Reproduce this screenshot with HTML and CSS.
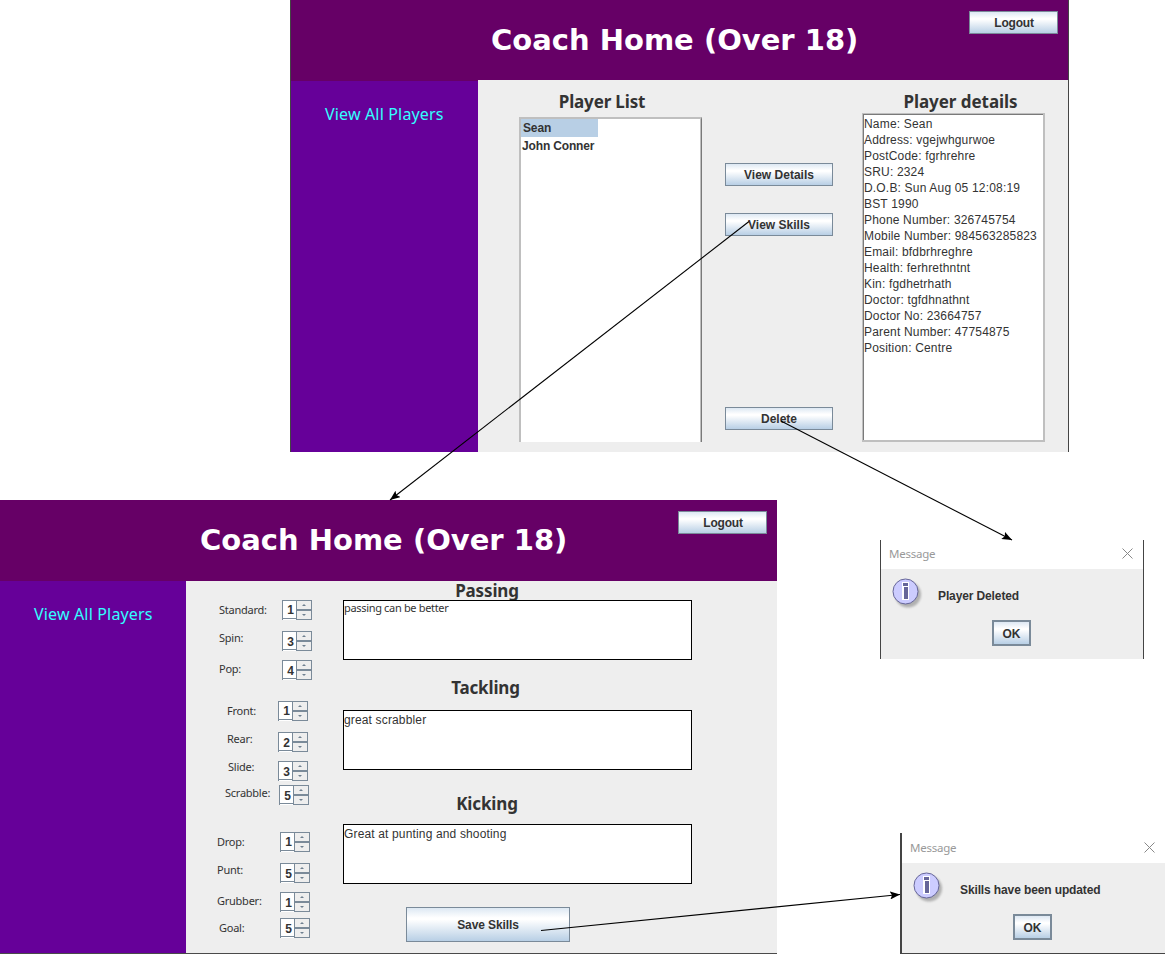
FILE: index.html
```html
<!DOCTYPE html>
<html lang="en">
<head>
<meta charset="utf-8">
<title>Coach Home</title>
<link rel="stylesheet" href="styles.css">
</head>
<body>
<main class="canvas">

  <section class="window home">
    <header class="banner"><h1>Coach Home (Over 18)</h1><button class="btn logout">Logout</button></header>
    <nav class="side"><a>View All Players</a></nav>
    <div class="home-body">
      <div class="list-col">
        <h2>Player List</h2>
        <ul class="list"><li class="selected">Sean</li><li>John Conner</li></ul>
      </div>
      <div class="actions">
        <button class="btn">View Details</button>
        <button class="btn">View Skills</button>
        <button class="btn delete">Delete</button>
      </div>
      <div class="details-col">
        <h2>Player details</h2>
        <div class="details">Name: Sean<br>Address: vgejwhgurwoe<br>PostCode: fgrhrehre<br>SRU: 2324<br>D.O.B: Sun Aug 05 12:08:19<br>BST 1990<br>Phone Number: 326745754<br>Mobile Number: 984563285823<br>Email: bfdbrhreghre<br>Health: ferhrethntnt<br>Kin: fgdhetrhath<br>Doctor: tgfdhnathnt<br>Doctor No: 23664757<br>Parent Number: 47754875<br>Position: Centre</div>
      </div>
    </div>
  </section>

  <section class="window skills">
    <header class="banner"><h1>Coach Home (Over 18)</h1><button class="btn logout">Logout</button></header>
    <nav class="side"><a>View All Players</a></nav>
    <div class="skills-body">
      <div class="ratings">
        <div class="group passing">
          <div class="row"><label>Standard:</label><span class="spin"><b>1</b><i class="up"></i><i class="down"></i></span></div>
          <div class="row gap-l"><label class="lift3">Spin:</label><span class="spin low"><b>3</b><i class="up"></i><i class="down"></i></span></div>
          <div class="row gap-m"><label class="lift1">Pop:</label><span class="spin low"><b>4</b><i class="up"></i><i class="down"></i></span></div>
        </div>
        <div class="group tackling">
          <div class="row"><label>Front:</label><span class="spin"><b>1</b><i class="up"></i><i class="down"></i></span></div>
          <div class="row gap-l"><label class="lift3">Rear:</label><span class="spin low"><b>2</b><i class="up"></i><i class="down"></i></span></div>
          <div class="row gap-m"><label class="lift4 in1">Slide:</label><span class="spin low"><b>3</b><i class="up"></i><i class="down"></i></span></div>
          <div class="row gap-s wide"><label class="lift2">Scrabble:</label><span class="spin low"><b>5</b><i class="up"></i><i class="down"></i></span></div>
        </div>
        <div class="group kicking">
          <div class="row"><label>Drop:</label><span class="spin"><b>1</b><i class="up"></i><i class="down"></i></span></div>
          <div class="row gap-l"><label class="lift3">Punt:</label><span class="spin low"><b>5</b><i class="up"></i><i class="down"></i></span></div>
          <div class="row gap-m"><label class="lift1">Grubber:</label><span class="spin low"><b>1</b><i class="up"></i><i class="down"></i></span></div>
          <div class="row gap-g"><label class="in2">Goal:</label><span class="spin low"><b>5</b><i class="up"></i><i class="down"></i></span></div>
        </div>
      </div>
      <div class="notes">
        <h2>Passing</h2>
        <div class="note tahoma">passing can be better</div>
        <h2 class="h-tackling">Tackling</h2>
        <div class="note">great scrabbler</div>
        <h2 class="h-kicking">Kicking</h2>
        <div class="note">Great at punting and shooting</div>
        <button class="btn save">Save Skills</button>
      </div>
    </div>
  </section>

  <section class="dialog deleted">
    <header><span>Message</span><svg class="close" viewBox="0 0 11 11"><path d="M.5.5l10 10M10.5.5l-10 10"/></svg></header>
    <div class="msg">
      <svg class="info" viewBox="0 0 32 32"><circle class="shade" cx="16" cy="16.500" r="13"/><circle class="disc" cx="13.500" cy="13.500" r="12.500"/><path class="glow" d="M10 4h7v18h-7z"/><path class="mark" d="M11 5h5v3h-5zM12 9h4v12h-4z"/></svg>
      <p>Player Deleted</p>
    </div>
    <button class="btn ok">OK</button>
  </section>

  <section class="dialog updated">
    <header><span>Message</span><svg class="close" viewBox="0 0 11 11"><path d="M.5.5l10 10M10.5.5l-10 10"/></svg></header>
    <div class="msg">
      <svg class="info" viewBox="0 0 32 32"><circle class="shade" cx="16" cy="16.500" r="13"/><circle class="disc" cx="13.500" cy="13.500" r="12.500"/><path class="glow" d="M10 4h7v18h-7z"/><path class="mark" d="M11 5h5v3h-5zM12 9h4v12h-4z"/></svg>
      <p>Skills have been updated</p>
    </div>
    <button class="btn ok">OK</button>
  </section>

  <svg class="arrows" viewBox="0 0 1165 956">
    <defs><marker id="head" viewBox="0 0 10 8" refX="10" refY="4" markerWidth="10" markerHeight="8" markerUnits="userSpaceOnUse" orient="auto"><path d="M0 0L10 4L0 8L2 4z"/></marker></defs>
    <path d="M749 221.500L390 500"/>
    <path d="M781 421L1012 540"/>
    <path d="M541 930.500L900 894.500"/>
  </svg>
</main>
</body>
</html>
```
FILE: styles.css
```css
* { box-sizing: border-box; }
body { margin: 0; background: #fff; }
h1, h2, p, ul { margin: 0; padding: 0; list-style: none; }
.canvas {
  position: relative; width: 1165px; height: 956px; overflow: hidden;
  font: 12px/16px "Liberation Sans", Arial, sans-serif; color: #333; white-space: nowrap;
}

.window { position: absolute; display: grid; background: #eee; }
.home { left: 290px; top: 0; width: 779px; height: 452px; border: solid #444; border-width: 0 1px; grid-template: 80px 372px / 187px 590px; }
.skills { left: 0; top: 500px; width: 777px; height: 454px; border-bottom: 1px solid #4a4a4a; grid-template: 81px 372px / 186px 591px; }

.banner { grid-column: 1 / 3; display: flex; justify-content: space-between; align-items: flex-start; background: #606; padding: 11px 10px 0 200px; }
h1 { font: bold 29px/34px "DejaVu Sans", Verdana, sans-serif; color: #fff; margin-top: 12px; }
.side { background: #609; color: #3ff; font: 16px/20px "Noto Sans", Tahoma, sans-serif; letter-spacing: .16px; padding: 23px 0 0 34px; }
.home .side { border-top: 1px solid #606; }
h2 { font: bold 17px/20px "Noto Sans", Tahoma, sans-serif; text-align: center; letter-spacing: -.15px; }

.btn {
  font: bold 12px/16px "Liberation Sans", Arial, sans-serif; color: #333; padding: 0;
  border: 1px solid #7a8a99; border-radius: 0; width: 108px; height: 23px;
  background: linear-gradient(#dde8f3, #fff 30%, #fff 35%, #b8cfe5);
}
.logout { width: 89px; letter-spacing: -.2px; padding-left: 1px; }

.home-body { display: grid; grid-template-columns: 183px 108px 183px; column-gap: 23px; padding: 12px 23px 10px 41px; }
.list-col, .details-col, .actions { display: flex; flex-direction: column; }
.list-col h2 { padding-right: 17px; }
.list { flex: 1; margin-top: 5px; background: #fff; border: 2px solid #bfbfbf; border-width: 2px 1px 0 2px; box-shadow: inset -1px 0 #bfbfbf; border-right-color: #7a7a7a; font-weight: bold; line-height: 18px; letter-spacing: -.15px; padding-top: 0; }
.list li { padding-left: 1px; }
.list .selected { width: 77px; padding-left: 2px; background: #b8cfe5; line-height: 19px; height: 18px; }
.list li + li { line-height: 19px; }
.actions { gap: 27px; padding-top: 71px; }
.delete { margin-top: 144px; }
.details-col { margin-left: 6px; width: 183px; }
.details-col h2 { padding-left: 14px; letter-spacing: -.05px; }
.details { flex: 1; margin-top: 1px; padding: 2px 0 0 1px; background: #fff; border: 1px solid #bfbfbf; border-right-width: 2px; border-bottom-width: 2px; box-shadow: inset 1px 1px #7a7a7a; letter-spacing: .18px; }

.skills-body { display: grid; grid-template-columns: 157px 349px; }
.ratings { padding-top: 19px; font: 11px/14px "Noto Sans", Tahoma, sans-serif; letter-spacing: -.25px; }
.row { display: flex; height: 20px; align-items: center; }
.row label { width: 63px; }
.passing { padding-left: 33px; }
.tackling { padding-left: 41px; margin-top: 21px; }
.tackling label { width: 51px; }
.kicking { padding-left: 31px; margin-top: 27px; }
.gap-l { margin-top: 11px; }
.gap-m { margin-top: 9px; }
.gap-s { margin-top: 4px; }
.gap-g { margin-top: 6px; }
.wide { margin-left: -2px; }
.tackling .wide label { width: 54px; }
.lift1 { padding-bottom: 2px; }
.lift2 { padding-bottom: 4px; }
.lift3 { padding-bottom: 6px; }
.lift4 { padding-bottom: 8px; }
.in1 { padding-left: 1px; }
.in2 { padding-left: 2px; }
.spin { width: 30px; height: 20px; display: grid; grid-template: 9px 10px / 13px 16px; border: solid #7a8a99; border-width: 1px 0 0 1px; }
.spin b { grid-row: 1 / 3; font: bold 12px/19px "Liberation Sans", Arial, sans-serif; letter-spacing: 0; text-align: right; padding-right: 2px; background: #fff; box-shadow: inset 0 -1px #fff, inset 0 -2px #7a8a99; height: 19px; }
.spin.low b { line-height: 20px; }
.spin i { display: flex; align-items: center; justify-content: center; border: 1px solid #7a8a99; border-top: 0; }
.spin .down { border-top: 1px solid #7a8a99; }
.spin i::before { content: ""; border: solid transparent; border-width: 0 2px 2px; border-bottom-color: #6f8090; }
.spin .down::before { border-width: 2px 2px 0; border-top-color: #6f8090; }

.notes { display: flex; flex-direction: column; }
.notes h2 { line-height: 19px; padding-right: 61px; }
.notes .h-tackling { margin-top: 18px; padding: 0 64px 13px 0; }
.notes .h-kicking { margin-top: 24px; padding-bottom: 11px; }
.note { height: 60px; background: #fff; border: 1px solid #000; padding-top: 1px; letter-spacing: .15px; }
.note.tahoma { font: 11px/14px "Noto Sans", Tahoma, sans-serif; letter-spacing: -.33px; padding-top: 0; }
.save { width: 164px; height: 35px; margin: 23px 0 0 63px; letter-spacing: -.1px; }

.dialog { position: absolute; background: #eee; border: 0 solid #444; display: flex; flex-direction: column; }
.deleted { left: 880px; top: 540px; width: 264px; height: 119px; border-width: 0 1px; }
.updated { left: 900px; top: 833px; width: 265px; height: 121px; border-width: 0 0 1px 2px; }
.dialog header { display: flex; justify-content: space-between; align-items: center; height: 29px; background: #fff; padding: 0 10px 2px 8px; font: 11.5px/16px "Noto Sans", Tahoma, sans-serif; letter-spacing: -.25px; color: #999; }
.updated header { height: 30px; }
.dialog header span { padding-top: 1px; }
.close { width: 11px; height: 11px; fill: none; stroke: #888; }
.msg { display: flex; height: 51px; padding: 9px 0 0 11px; font-weight: bold; letter-spacing: -.12px; }
.msg p { margin: 10px 0 0 14px; }
.updated .msg p { margin-left: 15px; }
.info { width: 32px; height: 32px; }
.shade { fill: #888; opacity: .6; filter: blur(1.3px); }
.disc { fill: #ccf; stroke: #669; }
.glow { fill: #fff; }
.mark { fill: #669; }
.ok { width: 39px; height: 26px; border-width: 2px; margin-left: 111px; padding-top: 1px; }

.arrows { position: absolute; inset: 0; width: 1165px; height: 956px; pointer-events: none; }
.arrows > path { stroke: #000; stroke-width: 1.1; marker-end: url(#head); }
```
